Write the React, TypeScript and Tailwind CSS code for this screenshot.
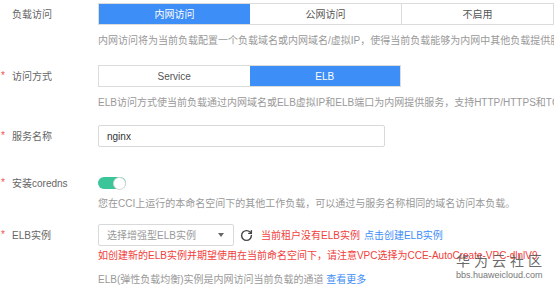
import { RotateCw } from 'lucide-react';

const FONT = { fontFamily: '"Liberation Sans", "Noto Sans CJK SC", sans-serif' };

function Label({ text, required }: { text: string; required?: boolean }) {
  return (
    <div className="relative flex w-[98px] shrink-0 items-center pl-3 text-[10px] text-[#666]">
      {required && (
        <span className="absolute top-1/2 left-[1px] -translate-y-[55%] text-[10px] text-[#f25252]">*</span>
      )}
      {text}
    </div>
  );
}

function Hint({ children, className = '' }: { children: React.ReactNode; className?: string }) {
  return (
    <div className={`pl-[98px] text-[10px] leading-[14px] whitespace-nowrap text-[#999] ${className}`}>
      {children}
    </div>
  );
}

function Segments({ items, active, full }: { items: string[]; active: number; full?: boolean }) {
  return (
    <div className={`flex h-[22px] border border-[#dcdcdc] ${full ? 'w-[456px]' : 'w-[303px]'}`}>
      {items.map((it, i) => (
        <div
          key={it}
          className={`flex flex-1 items-center justify-center text-[10px] ${
            i === active ? 'bg-[#3e8ef7] text-white' : 'text-[#555]'
          } ${i > 0 && i !== active && i - 1 !== active ? 'border-l border-[#dcdcdc]' : ''}`}
        >
          {it}
        </div>
      ))}
    </div>
  );
}

export default function App() {
  return (
    <div className="relative h-[288px] w-[554px] overflow-hidden bg-white" style={FONT}>
      <div className="mt-[3px] flex h-[22px]">
        <Label text="负载访问" />
        <Segments items={['内网访问', '公网访问', '不启用']} active={0} full />
      </div>
      <Hint className="mt-[9px]">
        内网访问将为当前负载配置一个负载域名或内网域名/虚拟IP，使得当前负载能够为内网中其他负载提供服务。
      </Hint>

      <div className="mt-[17px] flex h-[22px]">
        <Label text="访问方式" required />
        <Segments items={['Service', 'ELB']} active={1} />
      </div>
      <Hint className="mt-[9px]">
        ELB访问方式使当前负载通过内网域名或ELB虚拟IP和ELB端口为内网提供服务，支持HTTP/HTTPS和TCP协议。
      </Hint>

      <div className="mt-[15px] flex h-[22px]">
        <Label text="服务名称" required />
        <div className="flex h-[22px] w-[287px] items-center rounded-[2px] border border-[#d9d9d9] px-2 text-[10px] text-[#333]">
          nginx
        </div>
      </div>

      <div className="mt-[25px] flex h-[22px]">
        <Label text="安装coredns" required />
        <div className="flex items-center">
          <div className="flex h-[12px] w-[28px] items-center justify-end rounded-full bg-[#3dc59a]">
            <div className="h-[13px] w-[13px] rounded-full border border-[#d8d8d8] bg-white" />
          </div>
        </div>
      </div>
      <Hint className="mt-[3px]">
        您在CCI上运行的本命名空间下的其他工作负载，可以通过与服务名称相同的域名访问本负载。
      </Hint>

      <div className="mt-[13px] flex h-[22px]">
        <Label text="ELB实例" required />
        <div className="flex h-[22px] w-[136px] items-center justify-between rounded-[2px] border border-[#d9d9d9] pr-[9px] pl-2 text-[10px] text-[#999]">
          <span>选择增强型ELB实例</span>
          <span className="h-0 w-0 border-x-[3px] border-t-[4px] border-x-transparent border-t-[#666]" />
        </div>
        <div className="ml-[6px] flex items-center">
          <RotateCw size={13} strokeWidth={2.6} className="text-[#444]" />
        </div>
        <div className="ml-[8px] flex items-center text-[10px] whitespace-nowrap">
          <span className="text-[#f1403c]">当前租户没有ELB实例</span>
          <span className="ml-[4px] text-[#3e8ef7]">点击创建ELB实例</span>
        </div>
      </div>
      <Hint className="mt-[3px] !text-[#f1403c]">
        如创建新的ELB实例并期望使用在当前命名空间下，请注意VPC选择为CCE-AutoCreate-VPC-dlnlV9
      </Hint>
      <Hint className="mt-[10px]">
        ELB(弹性负载均衡)实例是内网访问当前负载的通道 <span className="text-[#3e8ef7]">查看更多</span>
      </Hint>

      <div className="absolute top-[254px] left-[456px] flex flex-col leading-none whitespace-nowrap">
        <span className="text-[14px] tracking-[4px] text-[#555]/90">华为云社区</span>
        <span className="mt-[3px] text-[9px] text-[#777]">bbs.huaweicloud.com</span>
      </div>
    </div>
  );
}
